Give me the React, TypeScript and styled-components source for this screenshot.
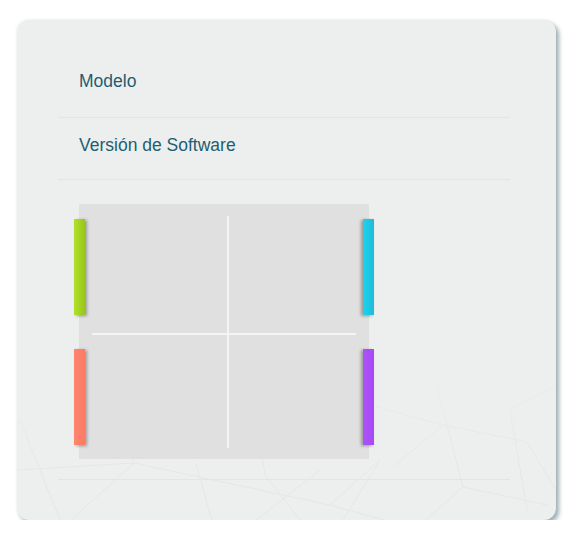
import * as React from "react";
import styled, { createGlobalStyle } from "styled-components";

const GlobalStyle = createGlobalStyle`
  html, body {
    margin: 0;
    padding: 0;
    background: #ffffff;
  }
  body {
    font-family: "Liberation Sans", Arial, Helvetica, sans-serif;
  }
`;

const Page = styled.div`
  padding: 20px 0 0 17px;
`;

const Card = styled.div`
  position: relative;
  box-sizing: border-box;
  width: 539px;
  height: 500px;
  padding: 35px 46px 0 41px;
  border-radius: 12px;
  background: #edefee;
  box-shadow: 3px 3px 4px rgba(105, 130, 140, 0.65), -1px -1px 3px rgba(0, 0, 0, 0.04);
  overflow: hidden;
`;

const Mesh = styled.svg`
  position: absolute;
  left: 0;
  top: 0;
  width: 539px;
  height: 500px;
  pointer-events: none;
`;

const Content = styled.div`
  position: relative;
`;

const InfoRow = styled.div<{ $pad: number; $height: number }>`
  box-sizing: border-box;
  height: ${(p) => p.$height}px;
  padding: ${(p) => p.$pad}px 0 0 21px;
  border-bottom: 1px solid #e2e5e5;
  font-size: 17.5px;
  line-height: 20px;
  color: #1d5e72;
`;

const ChassisArea = styled.div`
  padding: 24px 0 0 21px;
`;

const Chassis = styled.div`
  position: relative;
  box-sizing: border-box;
  width: 290px;
  height: 255px;
  padding: 12px 13px 11px 13px;
  background: #e0e0e0;
`;

const Quadrants = styled.div`
  display: grid;
  grid-template-columns: 135px 1fr;
  grid-template-rows: 117px 1fr;
  gap: 2px;
  height: 100%;
  background: #f4f4f4;
`;

const Quadrant = styled.div`
  background: #e0e0e0;
`;

const Slot = styled.div<{ $side: "left" | "right"; $top: number; $from: string; $to: string }>`
  position: absolute;
  top: ${(p) => p.$top}px;
  ${(p) => (p.$side === "left" ? "left: -5px;" : "right: -5px;")}
  width: 11px;
  height: 96px;
  background: linear-gradient(to right, ${(p) => p.$from}, ${(p) => p.$to});
  box-shadow: ${(p) => (p.$side === "left" ? "2px" : "-2px")} 1px 3px rgba(0, 0, 0, 0.32);
`;

const BottomRule = styled.div`
  margin-top: 20px;
  border-top: 1px solid #e2e5e5;
`;

const meshLines: [number, number, number, number][] = [
  [3, 400, 43, 500],
  [117, 443, 43, 510],
  [117, 443, 313, 485],
  [313, 485, 403, 510],
  [179, 443, 196, 505],
  [83, 340, 117, 443],
  [243, 420, 248, 455],
  [248, 455, 283, 500],
  [303, 450, 233, 505],
  [363, 440, 323, 505],
  [360, 387, 426, 405],
  [426, 405, 510, 422],
  [426, 405, 376, 447],
  [420, 367, 446, 467],
  [446, 467, 530, 485],
  [493, 390, 510, 490],
  [446, 467, 403, 505],
  [493, 390, 539, 365],
  [0, 450, 117, 443],
  [313, 485, 363, 440],
  [243, 420, 360, 387],
  [510, 422, 539, 470],
];

const MeshPattern = () => (
  <Mesh viewBox="0 0 539 500">
    <defs>
      <linearGradient id="meshFade" x1="0" y1="0" x2="0" y2="1">
        <stop offset="0.62" stopColor="#fff" stopOpacity="0" />
        <stop offset="0.9" stopColor="#fff" stopOpacity="0.75" />
      </linearGradient>
      <mask id="meshMask">
        <rect x="0" y="0" width="539" height="500" fill="url(#meshFade)" />
      </mask>
    </defs>
    <g mask="url(#meshMask)" stroke="#e0e4ea" strokeWidth="1" fill="none">
      {meshLines.map(([x1, y1, x2, y2], i) => (
        <line key={i} x1={x1} y1={y1} x2={x2} y2={y2} />
      ))}
    </g>
  </Mesh>
);

const slots = [
  { side: "left" as const, top: 15, from: "#b2e02a", to: "#96c61a" },
  { side: "left" as const, top: 145, from: "#ff866f", to: "#fb7a63" },
  { side: "right" as const, top: 15, from: "#18d6ec", to: "#22b9d9" },
  { side: "right" as const, top: 145, from: "#ad52fa", to: "#a64bf4" },
];

const App = () => {
  return (
    <Page>
      <GlobalStyle />
      <Card>
        <MeshPattern />
        <Content>
          <InfoRow $pad={16} $height={63}>Modelo</InfoRow>
          <InfoRow $pad={17} $height={62}>Versión de Software</InfoRow>
          <ChassisArea>
            <Chassis>
              <Quadrants>
                <Quadrant />
                <Quadrant />
                <Quadrant />
                <Quadrant />
              </Quadrants>
              {slots.map((s, i) => (
                <Slot key={i} $side={s.side} $top={s.top} $from={s.from} $to={s.to} />
              ))}
            </Chassis>
          </ChassisArea>
          <BottomRule />
        </Content>
      </Card>
    </Page>
  );
};

export default App;
